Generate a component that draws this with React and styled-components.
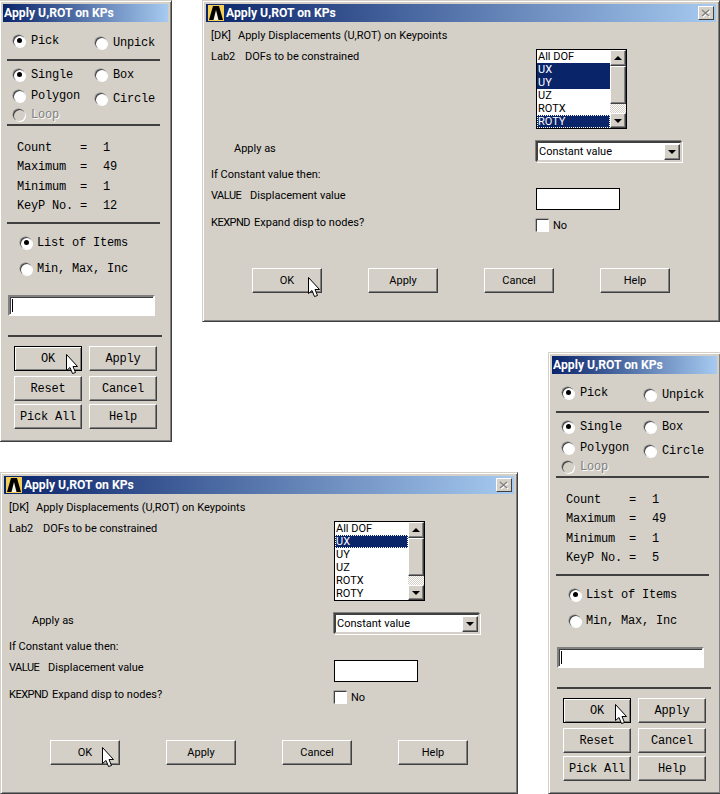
import React from 'react'
import styled, { createGlobalStyle, css } from 'styled-components'

const GlobalStyle = createGlobalStyle`
    html, body {
        margin: 0;
        padding: 0;
        background: #ffffff;
    }
`

const Desktop = styled.div`
    position: relative;
    width: 720px;
    height: 794px;
    overflow: hidden;
`

const Window = styled.div`
    position: absolute;
    left: ${props => props.$x}px;
    top: ${props => props.$y}px;
    width: ${props => props.$w}px;
    height: ${props => props.$h}px;
    box-sizing: border-box;
    padding: 3px 3px 0 3px;
    background: #d4d0c8;
    border: 1px solid;
    border-color: #d4d0c8 #404040 #404040 #d4d0c8;
    box-shadow: inset 1px 1px 0 #ffffff, inset -1px -1px 0 #808080;
`

const TitleBar = styled.div`
    display: flex;
    align-items: center;
    height: 18px;
    padding-left: ${props => props.$pad || 1}px;
    background: linear-gradient(90deg, #0a246a, #a6caf0);
`

const TitleText = styled.span`
    margin-left: ${props => props.$gap || 0}px;
    color: #ffffff;
    font: bold 12.2px Roboto, sans-serif;
    white-space: nowrap;
`

const CloseBox = styled.div`
    display: flex;
    align-items: center;
    justify-content: center;
    width: 16px;
    height: 14px;
    margin-left: auto;
    margin-right: 2px;
    box-sizing: border-box;
    background: #d4d0c8;
    border: 1px solid;
    border-color: #ffffff #404040 #404040 #ffffff;
`

/* picker panel */

const Mono = css`
    font: 12px/13px 'Liberation Mono', monospace;
    letter-spacing: -0.2px;
    color: #000000;
    white-space: pre;
`

const Separator = styled.div`
    height: 2px;
    width: ${props => props.$w || 153}px;
    margin-top: ${props => props.$top}px;
    margin-left: ${props => props.$left || 4}px;
    background: #404040;
`

const RadioRow = styled.div`
    display: grid;
    grid-template-columns: 82px auto;
    margin-top: ${props => props.$top}px;
    padding-left: 10px;
`

const RadioColumn = styled.div`
    display: flex;
    flex-direction: column;
`

const RadioItem = styled.label`
    ${Mono}
    display: flex;
    align-items: center;
    gap: ${props => props.$gap || 6}px;
    height: 13px;
    margin-top: ${props => props.$top || 0}px;
    ${props => props.$off && css`
        color: #808080;
        text-shadow: 1px 1px 0 #ffffff;
    `}
`

const RadioLabel = styled.span`
    margin-top: 2px;
`

const RadioDot = styled.span`
    position: relative;
    flex: none;
    width: 12px;
    height: 12px;
    border-radius: 50%;
    background: ${props => props.$off ? '#d4d0c8' : '#ffffff'};
    box-shadow: inset 1px 1px 0 #404040, -0.5px -0.5px 0 #808080, 1px 1px 0 #ffffff;

    &::after {
        content: '';
        display: ${props => props.$on ? 'block' : 'none'};
        position: absolute;
        left: 3.5px;
        top: 3.5px;
        width: 5px;
        height: 5px;
        border-radius: 50%;
        background: #000000;
    }
`

const StatsGrid = styled.div`
    ${Mono}
    display: grid;
    grid-template-columns: 63px 23px auto;
    grid-auto-rows: 19.25px;
    align-items: center;
    margin-top: 13px;
    padding-left: 14px;
`

const StackedRadios = styled.div`
    display: flex;
    flex-direction: column;
    gap: 13px;
    margin-top: 12px;
    padding-left: 17px;
`

const PickInput = styled.div`
    position: relative;
    box-sizing: border-box;
    width: 147px;
    height: 21px;
    margin: 20px 0 0 5px;
    background: #ffffff;
    border: 2px solid;
    border-color: #808080 #ffffff #ffffff #808080;
    box-shadow: inset 1px 1px 0 #404040;

    &::after {
        content: '';
        position: absolute;
        left: 2px;
        top: 2px;
        width: 1px;
        height: 13px;
        background: #000000;
    }
`

const PickButtons = styled.div`
    display: grid;
    grid-template-columns: 68px 68px;
    grid-template-rows: 30px 28px 25px;
    column-gap: 7px;
    margin-top: 9px;
    padding-left: 11px;
`

const Button = styled.div`
    position: relative;
    display: flex;
    align-items: center;
    justify-content: center;
    box-sizing: border-box;
    height: 25px;
    background: #d4d0c8;
    border: 1px solid;
    border-color: #ffffff #404040 #404040 #ffffff;
    box-shadow: inset -1px -1px 0 #808080;
    color: #000000;
    ${props => props.$mono
        ? css`
            ${Mono}
            padding-top: 2px;
        `
        : css`
            font: 11px Roboto, sans-serif;
            padding-bottom: 1px;
        `}
    ${props => props.$default && css`
        border-color: #000000;
        box-shadow: inset 1px 1px 0 #ffffff, inset -1px -1px 0 #808080;
    `}
`

const CursorSvg = styled.svg`
    position: absolute;
    left: ${props => props.$x}px;
    top: ${props => props.$y}px;
`

const Cursor = ({ x, y }) => (
    <CursorSvg $x={x} $y={y} width="14" height="22" viewBox="0 0 14 22">
        <path
            d="M1.5 1.5V17.5L5 14.5L7.5 20.5L10.5 19.5L8 13.5H12.5Z"
            fill="#ffffff"
            stroke="#000000"
            strokeWidth="1"
        />
    </CursorSvg>
)

const Radio = ({ label, on, off, top, gap }) => (
    <RadioItem $top={top} $off={off} $gap={gap}>
        <RadioDot $on={on} $off={off} />
        <RadioLabel>{label}</RadioLabel>
    </RadioItem>
)

const PickerPanel = ({ x, y, keyp, cursor }) => (
    <Window $x={x} $y={y} $w={173} $h={442}>
        <TitleBar>
            <TitleText>Apply U,ROT on KPs</TitleText>
        </TitleBar>
        <RadioRow $top={12}>
            <Radio label="Pick" on />
            <Radio label="Unpick" top={2} />
        </RadioRow>
        <Separator $top={10} />
        <RadioRow $top={7}>
            <RadioColumn>
                <Radio label="Single" on />
                <Radio label="Polygon" top={8} />
                <Radio label="Loop" off top={6} />
            </RadioColumn>
            <RadioColumn>
                <Radio label="Box" />
                <Radio label="Circle" top={11} />
            </RadioColumn>
        </RadioRow>
        <Separator $top={3} />
        <StatsGrid>
            <span>Count</span><span>=</span><span>1</span>
            <span>Maximum</span><span>=</span><span>49</span>
            <span>Minimum</span><span>=</span><span>1</span>
            <span>KeyP No.</span><span>=</span><span>{keyp}</span>
        </StatsGrid>
        <Separator $top={6} />
        <StackedRadios>
            <Radio label="List of Items" on gap={5} />
            <Radio label="Min, Max, Inc" gap={5} />
        </StackedRadios>
        <PickInput />
        <Separator $top={19} $left={5} $w={154} />
        <PickButtons>
            <Button $mono $default>
                OK
                <Cursor x={cursor[0]} y={cursor[1]} />
            </Button>
            <Button $mono>Apply</Button>
            <Button $mono>Reset</Button>
            <Button $mono>Cancel</Button>
            <Button $mono>Pick All</Button>
            <Button $mono>Help</Button>
        </PickButtons>
    </Window>
)

/* Apply Displacements dialog */

const Logo = () => (
    <svg width="16" height="16" viewBox="0 0 16 16">
        <rect width="16" height="16" fill="#f4cf55" />
        <polygon points="1,15 5,1 11,1 15,15" fill="#000000" />
        <polygon points="8,5 10.5,15 5.5,15" fill="#f7f4e4" />
    </svg>
)

const CloseGlyph = () => (
    <svg width="10" height="9" viewBox="0 0 10 9">
        <path d="M2 2L9 8M9 2L2 8" stroke="#ffffff" strokeWidth="1.4" />
        <path d="M1 1L8 7M8 1L1 7" stroke="#808080" strokeWidth="1.4" />
    </svg>
)

const DialogBody = styled.div`
    padding-left: 5px;
`

const DialogText = styled.div`
    height: 14px;
    font: 11px/16px Roboto, sans-serif;
    color: #000000;
    white-space: pre;
    margin-top: ${props => props.$top || 0}px;
    padding-left: ${props => props.$indent || 0}px;
`

const Tag = styled.span`
    display: inline-block;
    width: ${props => props.$w}px;
    letter-spacing: ${props => props.$tight ? '-0.5px' : '0'};
`

const FormRow = styled.div`
    display: grid;
    grid-template-columns: 325px auto;
    margin-top: ${props => props.$top}px;
`

const ListBox = styled.div`
    display: flex;
    box-sizing: border-box;
    width: 91px;
    height: 80px;
    background: #ffffff;
    border: 1px solid #000000;
`

const ListItems = styled.div`
    flex: 1;
    display: flex;
    flex-direction: column;
`

const ListItem = styled.div`
    box-sizing: border-box;
    height: 13px;
    padding-left: 1px;
    font: 11px/14px Roboto, sans-serif;
    color: ${props => props.$selected ? '#ffffff' : '#000000'};
    background: ${props => props.$selected ? '#0a246a' : '#ffffff'};
    ${props => props.$focus && css`
        outline: 1px dotted #ffffff;
        outline-offset: -1px;
    `}
`

const ScrollBar = styled.div`
    display: flex;
    flex-direction: column;
    width: 16px;
`

const RaisedPart = styled.div`
    display: flex;
    align-items: center;
    justify-content: center;
    box-sizing: border-box;
    height: ${props => props.$h}px;
    background: #d4d0c8;
    border: 1px solid;
    border-color: #ffffff #404040 #404040 #ffffff;
    box-shadow: inset -1px -1px 0 #808080;
`

const ScrollTrack = styled.div`
    height: ${props => props.$h}px;
    background: repeating-conic-gradient(#d4d0c8 0 25%, #ffffff 0 50%) 0 0 / 2px 2px;
`

const Arrow = styled.span`
    width: 0;
    height: 0;
    border-left: 4px solid transparent;
    border-right: 4px solid transparent;
    ${props => props.$up
        ? 'border-bottom: 4px solid #000000;'
        : 'border-top: 4px solid #000000;'}
`

const Sunken = css`
    box-sizing: border-box;
    background: #ffffff;
    border: 2px solid;
    border-color: #404040 #d4d0c8 #d4d0c8 #404040;
    box-shadow: -1px -1px 0 0 #808080, 1px 1px 0 0 #ffffff;
`

const Select = styled.div`
    ${Sunken}
    display: flex;
    align-items: center;
    justify-content: space-between;
    width: 146px;
    height: 21px;
    padding-left: 1px;
    font: 11px/16px Roboto, sans-serif;
    color: #000000;
`

const SelectButton = styled(RaisedPart)`
    width: 16px;
`

const ValueInput = styled.div`
    box-sizing: border-box;
    width: 84px;
    height: 22px;
    background: #ffffff;
    border: 1px solid #000000;
`

const CheckField = styled.label`
    display: flex;
    align-items: flex-start;
    gap: 4px;
    margin-top: 4px;
    font: 11px/14px Roboto, sans-serif;
    color: #000000;
`

const CheckBox = styled.span`
    box-sizing: border-box;
    width: 13px;
    height: 13px;
    background: #ffffff;
    border: 1px solid;
    border-color: #404040 #ffffff #ffffff #404040;
    box-shadow: -0.5px -0.5px 0 #808080;
`

const DialogButtons = styled.div`
    display: grid;
    grid-template-columns: repeat(4, 70px);
    column-gap: 46px;
    margin-top: 35px;
    padding-left: 41px;
`

const DOFS = ['All DOF', 'UX', 'UY', 'UZ', 'ROTX', 'ROTY']

const DisplacementDialog = ({ x, y, selected, focus, cursor }) => (
    <Window $x={x} $y={y} $w={518} $h={322}>
        <TitleBar $pad={2}>
            <Logo />
            <TitleText $gap={2}>Apply U,ROT on KPs</TitleText>
            <CloseBox><CloseGlyph /></CloseBox>
        </TitleBar>
        <DialogBody>
            <DialogText $top={6}><Tag $w={27}>[DK]</Tag>Apply Displacements (U,ROT) on Keypoints</DialogText>
            <FormRow $top={7}>
                <DialogText><Tag $w={34}>Lab2</Tag>DOFs to be constrained</DialogText>
                <ListBox>
                    <ListItems>
                        {DOFS.map(dof => (
                            <ListItem
                                key={dof}
                                $selected={selected.includes(dof)}
                                $focus={dof === focus}
                            >
                                {dof}
                            </ListItem>
                        ))}
                    </ListItems>
                    <ScrollBar>
                        <RaisedPart $h={16}><Arrow $up /></RaisedPart>
                        <RaisedPart $h={38} />
                        <ScrollTrack $h={9} />
                        <RaisedPart $h={15}><Arrow /></RaisedPart>
                    </ScrollBar>
                </ListBox>
            </FormRow>
            <FormRow $top={12}>
                <DialogText $indent={23}>Apply as</DialogText>
                <Select>
                    Constant value
                    <SelectButton $h={16}><Arrow /></SelectButton>
                </Select>
            </FormRow>
            <DialogText $top={5}>If Constant value then:</DialogText>
            <FormRow $top={7}>
                <DialogText><Tag $w={39} $tight>VALUE</Tag>Displacement value</DialogText>
                <ValueInput />
            </FormRow>
            <FormRow $top={5}>
                <DialogText><Tag $w={43} $tight>KEXPND</Tag>Expand disp to nodes?</DialogText>
                <CheckField><CheckBox />No</CheckField>
            </FormRow>
            <DialogButtons>
                <Button>
                    OK
                    <Cursor x={cursor[0]} y={cursor[1]} />
                </Button>
                <Button>Apply</Button>
                <Button>Cancel</Button>
                <Button>Help</Button>
            </DialogButtons>
        </DialogBody>
    </Window>
)

export default function App() {
    return (
        <Desktop>
            <GlobalStyle />
            <PickerPanel x={-1} y={0} keyp="12" cursor={[50, 6]} />
            <DisplacementDialog
                x={202}
                y={0}
                selected={['UX', 'UY', 'ROTY']}
                focus="ROTY"
                cursor={[54, 7]}
            />
            <PickerPanel x={548} y={352} keyp="5" cursor={[50, 4]} />
            <DisplacementDialog
                x={0}
                y={472}
                selected={['UX']}
                focus="UX"
                cursor={[50, 5]}
            />
        </Desktop>
    )
}
